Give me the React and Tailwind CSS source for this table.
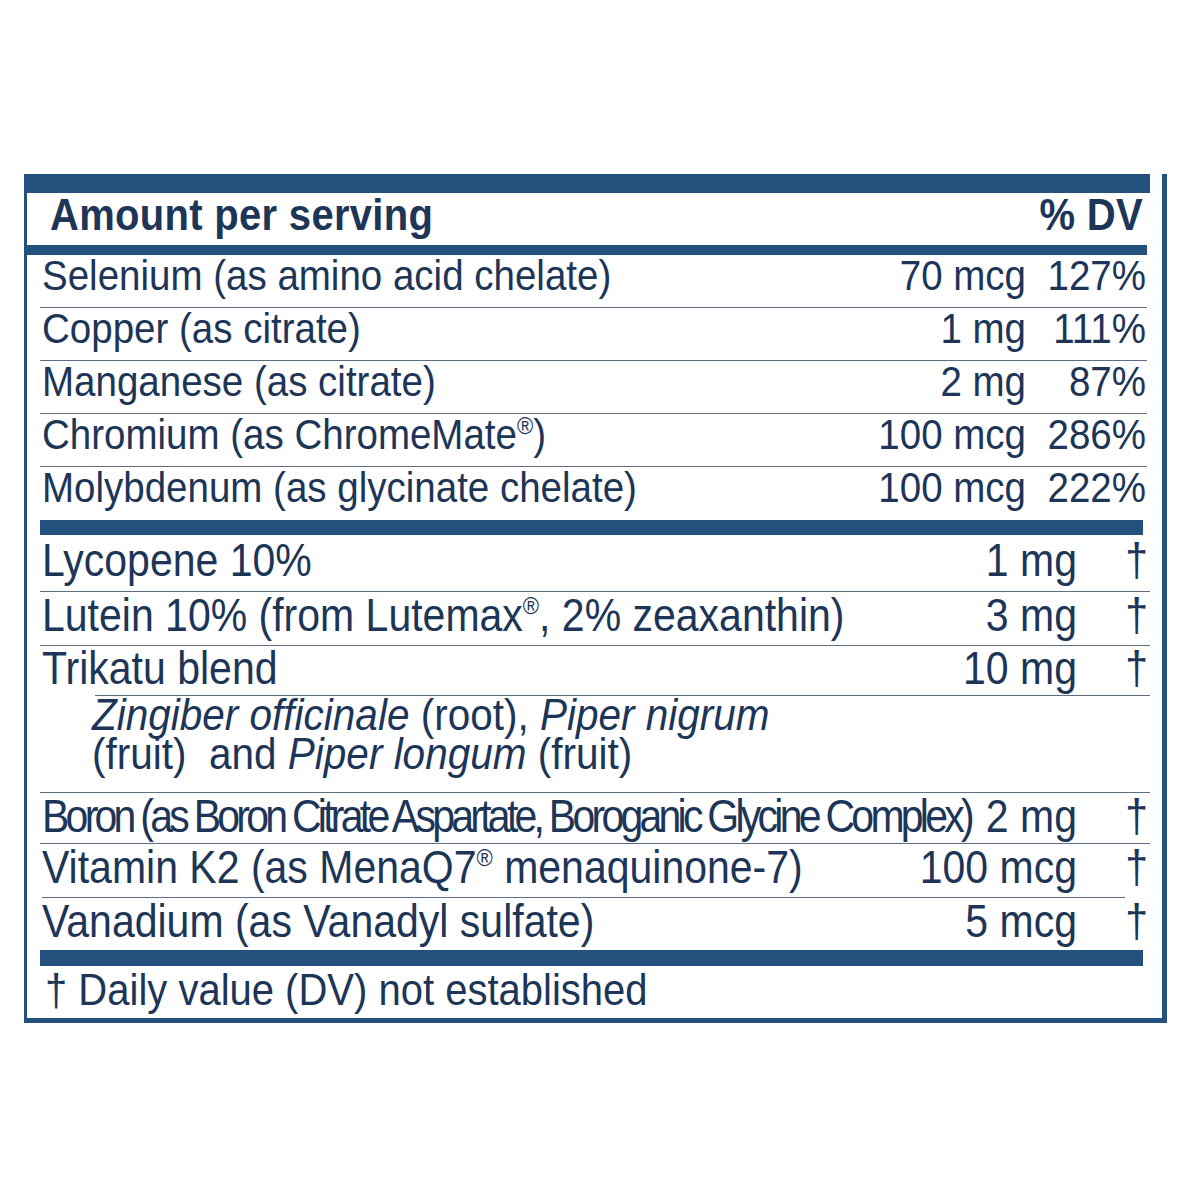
const minerals = [
  { name: 'Selenium (as amino acid chelate)', amount: '70 mcg', dv: '127%' },
  { name: 'Copper (as citrate)', amount: '1 mg', dv: '111%' },
  { name: 'Manganese (as citrate)', amount: '2 mg', dv: '87%' },
  { name: <>Chromium (as ChromeMate<sup className="text-[22px] -top-[14px]">®</sup>)</>, amount: '100 mcg', dv: '286%' },
  { name: 'Molybdenum (as glycinate chelate)', amount: '100 mcg', dv: '222%' },
];

// label art is a bit taller than Arial, stretch glyphs around the baseline
const tall1 = 'inline-block origin-[50%_35px] scale-y-[1.09]';
const tall2 = 'inline-block origin-[50%_39px] scale-y-[1.11]';
const line = 'border-[#5d6e82]';

const Dagger = () => <span className={`w-[73px] pr-[2px] text-right ${tall2}`}>†</span>;

const App = () => {
  return (
    <div className="w-[1200px] h-[1200px] bg-white pt-[174px] text-[#1d3557] font-['Liberation_Sans',Arial,sans-serif]">
      <div className="ml-[24px] w-[1143px] border-l-[3px] border-r-[5px] border-b-[5px] border-[#24507d]">
        {/* top bar */}
        <div className="-ml-[3px] w-[1126px] h-[19px] bg-[#24507d]" />

        {/* header */}
        <div className="h-[52px] flex justify-between pl-[23px] pr-[19px] text-[40px] leading-[46px] font-bold tracking-[0.3px]">
          <span className="inline-block origin-[50%_37px] scale-y-[1.11]">Amount per serving</span>
          <span className="inline-block origin-[50%_37px] scale-y-[1.11]">% DV</span>
        </div>
        <div className="-ml-[3px] w-[1123px] h-[10px] bg-[#24507d]" />

        {/* minerals */}
        <div className="ml-[13px] w-[1107px] text-[38.5px] leading-[44px]">
          {minerals.map((m, i) => (
            <div
              key={i}
              className={`h-[53px] flex pl-[2px] ${i < minerals.length - 1 ? `border-b ${line}` : ''}`}
            >
              <span className={`flex-1 whitespace-nowrap ${tall1}`}>{m.name}</span>
              <span className={`text-right ${tall1}`}>{m.amount}</span>
              <span className={`w-[121px] pr-[1px] text-right ${tall1}`}>{m.dv}</span>
            </div>
          ))}
        </div>
        <div className="ml-[13px] w-[1103px] h-[15px] bg-[#24507d]" />

        {/* other ingredients */}
        <div className="ml-[13px] w-[1110px] text-[41px] leading-[50px]">
          <div className={`h-[57px] flex pl-[2px] pt-[2px] border-b ${line}`}>
            <span className={`flex-1 ${tall2}`}>Lycopene 10%</span>
            <span className={`text-right ${tall2}`}>1 mg</span>
            <Dagger />
          </div>
          <div className={`h-[54px] flex pl-[2px] border-b ${line}`}>
            <span className={`flex-1 whitespace-nowrap ${tall2}`}>
              Lutein 10% (from Lutemax<sup className="text-[22px] -top-[15px]">®</sup>, 2% zeaxanthin)
            </span>
            <span className={`text-right ${tall2}`}>3 mg</span>
            <Dagger />
          </div>
          <div className="h-[50px] flex pl-[2px] -mt-[1px]">
            <span className={`flex-1 ${tall2}`}>Trikatu blend</span>
            <span className={`text-right ${tall2}`}>10 mg</span>
            <Dagger />
          </div>
          <div className={`ml-[55px] border-t ${line}`} />
          <div className={`h-[97px] pl-[52px] pt-[1px] text-[40.5px] leading-[39px] border-b ${line}`}>
            <div className="origin-[50%_34px] scale-y-[1.1]">
              <i>Zingiber officinale</i> (root), <i>Piper nigrum</i>
            </div>
            <div className="origin-[50%_34px] scale-y-[1.1]">
              (fruit)&nbsp; and <i>Piper longum</i> (fruit)
            </div>
          </div>
          <div className={`h-[51px] flex pl-[2px] border-b ${line}`}>
            <span className={`flex-1 whitespace-nowrap tracking-[-3.75px] ${tall2}`}>
              Boron (as Boron Citrate Aspartate, Boroganic Glycine Complex)
            </span>
            <span className={`text-right ${tall2}`}>2 mg</span>
            <Dagger />
          </div>
          <div className="h-[54px] flex pl-[2px]">
            <span className={`flex-1 whitespace-nowrap border-b ${line}`}>
              <span className={tall2}>
                Vitamin K2 (as MenaQ7<sup className="text-[22px] -top-[15px]">®</sup> menaquinone-7)
              </span>
            </span>
            <span className={`text-right border-b ${line}`}>
              <span className={tall2}>100 mcg</span>
            </span>
            <span className="w-[73px] flex justify-end">
              <span className={`w-[48px] border-b ${line}`} />
              <span className={`w-[25px] pr-[2px] text-right ${tall2}`}>†</span>
            </span>
          </div>
          <div className="h-[52px] flex pl-[2px]">
            <span className={`flex-1 ${tall2}`}>Vanadium (as Vanadyl sulfate)</span>
            <span className={`text-right ${tall2}`}>5 mcg</span>
            <Dagger />
          </div>
        </div>
        <div className="ml-[13px] w-[1103px] h-[16px] bg-[#24507d]" />

        {/* footnote */}
        <div className="h-[52px] pl-[18px] text-[40px] leading-[50px]">
          <span className="inline-block origin-[50%_39px] scale-y-[1.1]">† Daily value (DV) not established</span>
        </div>
      </div>
    </div>
  );
};

export default App;
